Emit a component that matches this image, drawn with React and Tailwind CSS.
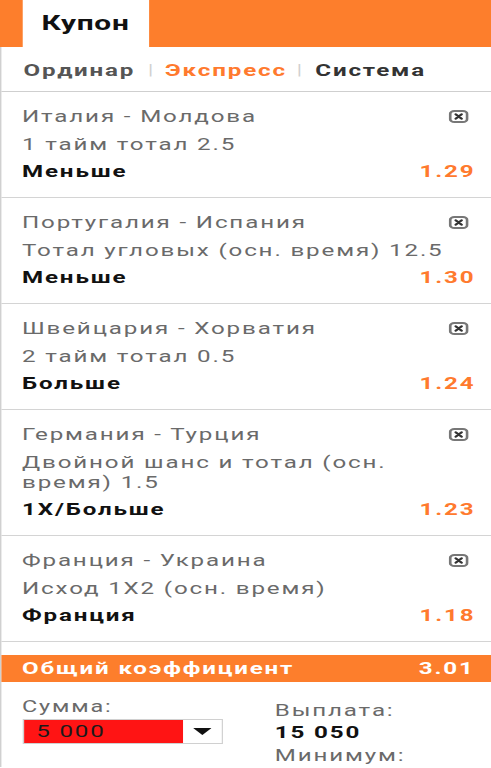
const bets = [
  { match: 'Италия - Молдова', market: '1 тайм тотал 2.5', pick: 'Меньше', odds: '1.29' },
  { match: 'Португалия - Испания', market: 'Тотал угловых (осн. время) 12.5', pick: 'Меньше', odds: '1.30' },
  { match: 'Швейцария - Хорватия', market: '2 тайм тотал 0.5', pick: 'Больше', odds: '1.24' },
  { match: 'Германия - Турция', market: 'Двойной шанс и тотал (осн. время) 1.5', pick: '1X/Больше', odds: '1.23' },
  { match: 'Франция - Украина', market: 'Исход 1X2 (осн. время)', pick: 'Франция', odds: '1.18' },
]

// the whole coupon is laid out at phone width and stretched sideways, like the screenshot
function CloseIcon() {
  return (
    <svg width="14" height="13" viewBox="0 0 14 13" className="mr-[5px] shrink-0">
      <rect x="1" y="1" width="12" height="11" rx="3" fill="none" stroke="#777" strokeWidth="2" />
      <path d="M5 4.3 L9 8.7 M9 4.3 L5 8.7" stroke="#333" strokeWidth="2" strokeLinecap="round" />
    </svg>
  )
}

function BetCard({ bet }) {
  return (
    <div className="border-b border-[#d4d4d4] pl-[14.5px] pr-[11px] pt-[14px] pb-[16px]">
      <div className="flex items-center justify-between">
        <span className="leading-[20px] text-[#6a6a6a]">{bet.match}</span>
        <CloseIcon />
      </div>
      <div className="mt-[8px] pr-[14px] leading-[20px] text-[#6a6a6a]">{bet.market}</div>
      <div className="mt-[7px] flex items-center justify-between font-bold leading-[20px]">
        <span className="text-[#111]">{bet.pick}</span>
        <span className="text-[#ff7a2e]">{bet.odds}</span>
      </div>
    </div>
  )
}

export default function App() {
  return (
    <div className="h-[768px] w-[491px] overflow-hidden bg-white">
      <div className="w-[345.8px] origin-top-left scale-x-[1.42] text-[17px] tracking-[1.3px] font-['Roboto',sans-serif]">
        <div className="flex h-[47px] bg-[#fd7e2c] pl-[15.5px]">
          <div className="flex w-[89.5px] items-center justify-center bg-white text-[21px] font-bold tracking-[0.5px] text-[#111]">
            Купон
          </div>
        </div>

        <div className="border-l-[1.5px] border-[#d0d0d0]">
          <div className="flex h-[45px] items-center border-b border-[#cfcfcf] pl-[15.5px] pt-[3px] font-bold">
            <span className="text-[#555]">Ординар</span>
            <span className="ml-[9px] mr-[7px] text-[15px] font-normal text-[#d0d0d0]">|</span>
            <span className="text-[#ff7a2e]">Экспресс</span>
            <span className="ml-[7px] mr-[8px] text-[15px] font-normal text-[#d0d0d0]">|</span>
            <span className="text-[#333]">Система</span>
          </div>

          {bets.map((bet) => (
            <BetCard key={bet.match} bet={bet} />
          ))}

          <div className="mt-[13px] flex h-[27px] items-center justify-between bg-[#fd7e2c] pl-[14.5px] pr-[11.5px] font-bold text-white">
            <span>Общий коэффициент</span>
            <span>3.01</span>
          </div>

          <div className="flex pl-[14.5px] pt-[15px]">
            <div className="w-[178px]">
              <div className="text-[16.5px] leading-[20px] text-[#6a6a6a]">Сумма:</div>
              <div className="mt-[2px] flex h-[25px] w-[141px] border border-[#d0d0d0]">
                <div className="flex w-[112px] items-center bg-[#ff1414] pl-[9px] text-[#1a1a1a]">5 000</div>
                <div className="flex flex-1 items-center justify-center bg-white">
                  <svg width="13" height="7" viewBox="0 0 13 7">
                    <path d="M0 0 H13 L6.5 7 Z" fill="#111" />
                  </svg>
                </div>
              </div>
            </div>
            <div className="flex flex-col pt-[2px]">
              <span className="leading-[22px] text-[#6a6a6a]">Выплата:</span>
              <span className="font-bold leading-[22px] text-[#111]">15 050</span>
              <span className="leading-[24px] text-[#6a6a6a]">Минимум:</span>
            </div>
          </div>
        </div>
      </div>
    </div>
  )
}
